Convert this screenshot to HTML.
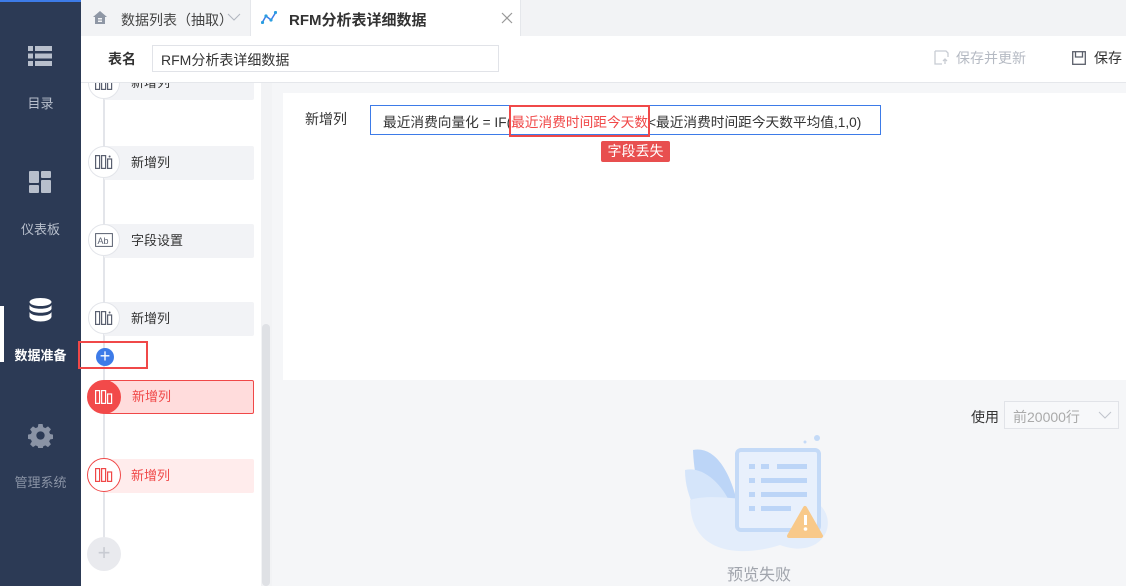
<!DOCTYPE html>
<html><head><meta charset="utf-8"><style>
*{margin:0;padding:0;box-sizing:border-box}
body{width:1126px;height:586px;overflow:hidden;font-family:"Liberation Sans","Noto Sans CJK SC",sans-serif;font-size:13px;color:#333;background:#f5f6f8;position:relative}
.abs{position:absolute}
.side{left:0;top:0;width:81px;height:586px;background:#2c3a55}
.si{position:absolute;left:0;width:81px;text-align:center;color:#b8bfcc;font-size:13px}
.tabs{left:81px;top:0;width:1045px;height:36px;background:#f2f3f5}
.node{position:absolute;left:7px;width:32px;height:32px;border-radius:50%;background:#fff;border:1px solid #e3e5ea}
.item{position:absolute;left:23px;width:150px;height:34px;background:#f2f3f6;border-radius:2px;padding-left:27px;line-height:34px;color:#333;font-size:13px}
.lp{position:absolute;left:81px;top:83px;width:191px;height:503px;background:#fff;overflow:hidden}
.lp .a{position:absolute}
</style></head><body>
<div class="abs side"></div>
<div class="abs" style="left:0;top:0;width:81px;height:2px;background:#3d7be8"></div>
<div class="abs" style="left:0;top:306px;width:4px;height:56px;background:#fff"></div>
<svg class="abs" style="left:28px;top:45px" width="24" height="22"><g fill="#b8bfcc"><rect x="0" y="1" width="5" height="5"/><rect x="7" y="1" width="17" height="5"/><rect x="0" y="8.5" width="5" height="5"/><rect x="7" y="8.5" width="17" height="5"/><rect x="0" y="16" width="5" height="5"/><rect x="7" y="16" width="17" height="5"/></g></svg>
<div class="si" style="top:93px">目录</div>
<svg class="abs" style="left:29px;top:171px" width="22" height="22"><g fill="#b8bfcc"><rect x="0" y="0" width="10" height="12" rx="1"/><rect x="12" y="0" width="10" height="7" rx="1"/><rect x="0" y="14" width="10" height="8" rx="1"/><rect x="12" y="9" width="10" height="13" rx="1"/></g></svg>
<div class="si" style="top:219px">仪表板</div>
<svg class="abs" style="left:29px;top:298px" width="23" height="24"><g fill="#fff"><ellipse cx="11.5" cy="4" rx="11" ry="4"/><path d="M0.5 7c2 5 20 5 22 0v4c-2 5-20 5-22 0z"/><path d="M0.5 14c2 5 20 5 22 0v5c-2 6-20 6-22 0z"/></g></svg>
<div class="si" style="top:345px;color:#fff;font-weight:bold">数据准备</div>
<svg class="abs" style="left:28px;top:423px" width="25" height="25" viewBox="0 0 24 24"><path fill="#8a93a5" d="M10 1h4l.6 3 2 .9 2.6-1.7 2.8 2.8-1.7 2.6.9 2 3 .6v4l-3 .6-.9 2 1.7 2.6-2.8 2.8-2.6-1.7-2 .9-.6 3h-4l-.6-3-2-.9-2.6 1.7-2.8-2.8 1.7-2.6-.9-2-3-.6v-4l3-.6.9-2-1.7-2.6 2.8-2.8 2.6 1.7 2-.9zM12 8a4 4 0 100 8 4 4 0 000-8z"/></svg>
<div class="si" style="top:472px;color:#8a93a5">管理系统</div>

<div class="abs tabs"></div>
<svg class="abs" style="left:93px;top:11px" width="14" height="13"><path fill="#8f97a5" d="M7 0L0 6h2v7h10V6h2z"/><rect x="5" y="7" width="4" height="1.5" fill="#f2f3f5"/><rect x="5" y="9.5" width="4" height="1.5" fill="#f2f3f5"/></svg>
<div class="abs" style="left:121px;top:10px;font-size:14px;color:#444">数据列表（抽取）</div>
<svg class="abs" style="left:227px;top:13px" width="14" height="9"><path d="M1 1l6 6 6-6" stroke="#b0b5bf" fill="none"/></svg>
<div class="abs" style="left:250px;top:0;width:271px;height:36px;background:#fff;border-left:1px solid #e5e7eb;border-right:1px solid #e5e7eb"></div>
<svg class="abs" style="left:261px;top:11px" width="16" height="13"><path d="M1 12L5 5 10 9 15 1" stroke="#3d7be8" stroke-width="1.5" fill="none"/><g fill="#2a9ee0"><circle cx="1.5" cy="11.5" r="1.6"/><circle cx="5" cy="5" r="1.6"/><circle cx="10" cy="9" r="1.6"/><circle cx="14.5" cy="1.5" r="1.6"/></g></svg>
<div class="abs" style="left:289px;top:9px;font-size:15px;font-weight:bold;color:#333">RFM分析表详细数据</div>
<svg class="abs" style="left:501px;top:12px" width="12" height="12"><path d="M1 1l10 10M11 1L1 11" stroke="#999" stroke-width="1.2"/></svg>

<div class="abs" style="left:81px;top:36px;width:1045px;height:47px;background:#fff;border-bottom:1px solid #e5e7eb"></div>
<div class="abs" style="left:108px;top:49px;font-size:14px;font-weight:bold;color:#333">表名</div>
<div class="abs" style="left:152px;top:45px;width:347px;height:27px;border:1px solid #e1e3e8;padding:4px 8px;font-size:14px;color:#333">RFM分析表详细数据</div>
<svg class="abs" style="left:934px;top:50px" width="15" height="15"><path d="M1 1h11l2 2v4M1 1v13h7" stroke="#c8ccd3" fill="none" stroke-width="1.3"/><path d="M11 14V9M9 11l2-2 2 2" stroke="#c8ccd3" fill="none" stroke-width="1.3"/></svg>
<div class="abs" style="left:956px;top:48px;color:#b5bac3;font-size:14px">保存并更新</div>
<svg class="abs" style="left:1072px;top:51px" width="14" height="14"><rect x="0.7" y="0.7" width="12.6" height="12.6" stroke="#5a5f6a" fill="none" stroke-width="1.3"/><path d="M3.5 1v5h7V1" stroke="#5a5f6a" fill="none" stroke-width="1.3"/></svg>
<div class="abs" style="left:1094px;top:48px;color:#333;font-size:14px">保存</div>

<div class="lp">
<div class="a" style="left:22px;top:0;width:2px;height:470px;background:#e3e5ea"></div>
<div class="item" style="top:-17px">新增列</div>
<div class="node" style="top:-16px"></div>
<svg class="a" style="left:14px;top:-7px" width="18" height="14"><g stroke="#5a6070" fill="none" stroke-width="1.2"><rect x="0.6" y="0.6" width="4" height="12.8"/><rect x="6.6" y="0.6" width="4" height="12.8"/><rect x="12.6" y="4" width="4" height="9.4"/></g></svg>
<div class="item" style="top:63px">新增列</div>
<div class="node" style="top:63px"></div>
<div class="item" style="top:141px">字段设置</div>
<div class="node" style="top:141px"></div>
<div class="item" style="top:219px">新增列</div>
<div class="node" style="top:219px"></div>
<svg class="a" style="left:14px;top:72px" width="18" height="14"><g stroke="#5a6070" fill="none" stroke-width="1.2"><rect x="0.6" y="0.6" width="4" height="12.8"/><rect x="6.6" y="0.6" width="4" height="12.8"/><rect x="12.6" y="4" width="4" height="9.4"/></g><circle cx="14.6" cy="1.5" r="1" fill="#5a6070"/></svg>
<svg class="a" style="left:14px;top:150px" width="18" height="14"><rect x="0.6" y="0.6" width="16.8" height="12.8" stroke="#5a6070" fill="none"/><text x="2.5" y="11" font-size="9" fill="#5a6070" font-family="Liberation Sans">Ab</text></svg>
<svg class="a" style="left:14px;top:228px" width="18" height="14"><g stroke="#5a6070" fill="none" stroke-width="1.2"><rect x="0.6" y="0.6" width="4" height="12.8"/><rect x="6.6" y="0.6" width="4" height="12.8"/><rect x="12.6" y="4" width="4" height="9.4"/></g><circle cx="14.6" cy="1.5" r="1" fill="#5a6070"/></svg>
<div class="item" style="top:297px;background:#ffdcdc;border:1px solid #f04848;color:#f04848;line-height:32px">新增列</div>
<div class="node" style="top:297px;width:34px;height:34px;left:6px;background:#f24a4a;border-color:#f24a4a"></div>
<svg class="a" style="left:14px;top:307px" width="18" height="14"><g stroke="#fff" fill="none" stroke-width="1.2"><rect x="0.6" y="0.6" width="4" height="12.8"/><rect x="6.6" y="0.6" width="4" height="12.8"/><rect x="12.6" y="4" width="4" height="9.4"/></g></svg>
<div class="item" style="top:376px;background:#ffecec;color:#f04848">新增列</div>
<div class="node" style="top:375px;width:34px;height:34px;left:6px;border-color:#f04848"></div>
<svg class="a" style="left:14px;top:385px" width="18" height="14"><g stroke="#f04848" fill="none" stroke-width="1.2"><rect x="0.6" y="0.6" width="4" height="12.8"/><rect x="6.6" y="0.6" width="4" height="12.8"/><rect x="12.6" y="4" width="4" height="9.4"/></g></svg>
<div class="a" style="left:6px;top:454px;width:34px;height:34px;border-radius:50%;background:#e9eaee;color:#c8cbd2;text-align:center;line-height:32px;font-size:22px">+</div>
<div class="a" style="left:180px;top:0;width:11px;height:503px;background:#f2f3f5"></div>
<div class="a" style="left:181px;top:241px;width:8px;height:262px;background:#dfe1e5;border-radius:4px"></div>
</div>
<div class="abs" style="left:78px;top:341px;width:70px;height:28px;border:2px solid #f04848"></div>
<div class="abs" style="left:96px;top:348px;width:18px;height:18px;border-radius:50%;background:#3d7be8;color:#fff;text-align:center;line-height:17px;font-size:18px">+</div>

<div class="abs" style="left:283px;top:93px;width:843px;height:287px;background:#fff"></div>
<div class="abs" style="left:305px;top:109px;color:#333;font-size:14px">新增列</div>
<div class="abs" style="left:370px;top:105px;width:511px;height:30px;border:1px solid #3d7be8;padding:5px 12px;color:#333;white-space:nowrap;font-size:13.7px">最近消费向量化 = IF(<span style="color:#f04848">最近消费时间距今天数</span>&lt;最近消费时间距今天数平均值,1,0)</div>
<div class="abs" style="left:509px;top:105px;width:141px;height:32px;border:2px solid #f04848"></div>
<div class="abs" style="left:601px;top:141px;width:69px;height:21px;background:#e84f4f;color:#fff;border-radius:2px;text-align:center;line-height:21px;font-size:14px">字段丢失</div>

<div class="abs" style="left:971px;top:407px;color:#333;font-size:14px">使用</div>
<div class="abs" style="left:1004px;top:401px;width:115px;height:28px;border:1px solid #e1e3e8;padding:5px 8px;color:#aaa;background:#f7f8fa;font-size:14px">前20000行</div>
<svg class="abs" style="left:1098px;top:411px" width="14" height="8"><path d="M1 1l6 6 6-6" stroke="#c0c4cc" fill="none"/></svg>

<svg class="abs" style="left:685px;top:430px" width="150" height="130">
<path d="M8 20c25-5 45 30 50 90C30 110 10 70 8 20z" fill="#bcd5f7"/>
<path d="M0 40c20-5 50 20 55 70C30 110 0 80 0 40z" fill="#d5e5fa"/>
<path d="M5 70c30-10 100 10 130 5 20 20 0 55-40 40-30 10-90 15-90-45z" fill="#e3edfb"/>
<rect x="52" y="20" width="82" height="80" rx="4" fill="#e8f0fc" stroke="#c4daf7" stroke-width="4"/>
<g fill="#bcd5f7"><rect x="64" y="34" width="6" height="5"/><rect x="76" y="34" width="8" height="5"/><rect x="92" y="34" width="30" height="5"/><rect x="64" y="48" width="6" height="5"/><rect x="76" y="48" width="46" height="5"/><rect x="64" y="62" width="6" height="5"/><rect x="76" y="62" width="46" height="5"/><rect x="64" y="76" width="6" height="5"/><rect x="76" y="76" width="30" height="5"/></g>
<circle cx="132" cy="8" r="3" fill="#c4daf7"/><circle cx="120" cy="12" r="1.5" fill="#c4daf7"/><circle cx="152" cy="32" r="2" fill="#c4daf7"/>
<path d="M120 78l16 28h-32z" fill="#f8c98a" stroke="#f8c98a" stroke-width="4" stroke-linejoin="round"/>
<rect x="119" y="85" width="3" height="10" fill="#fff"/><circle cx="120.5" cy="99" r="1.8" fill="#fff"/>
</svg>
<div class="abs" style="left:727px;top:561px;color:#a0a4ac;font-size:16px">预览失败</div>
</body></html>
